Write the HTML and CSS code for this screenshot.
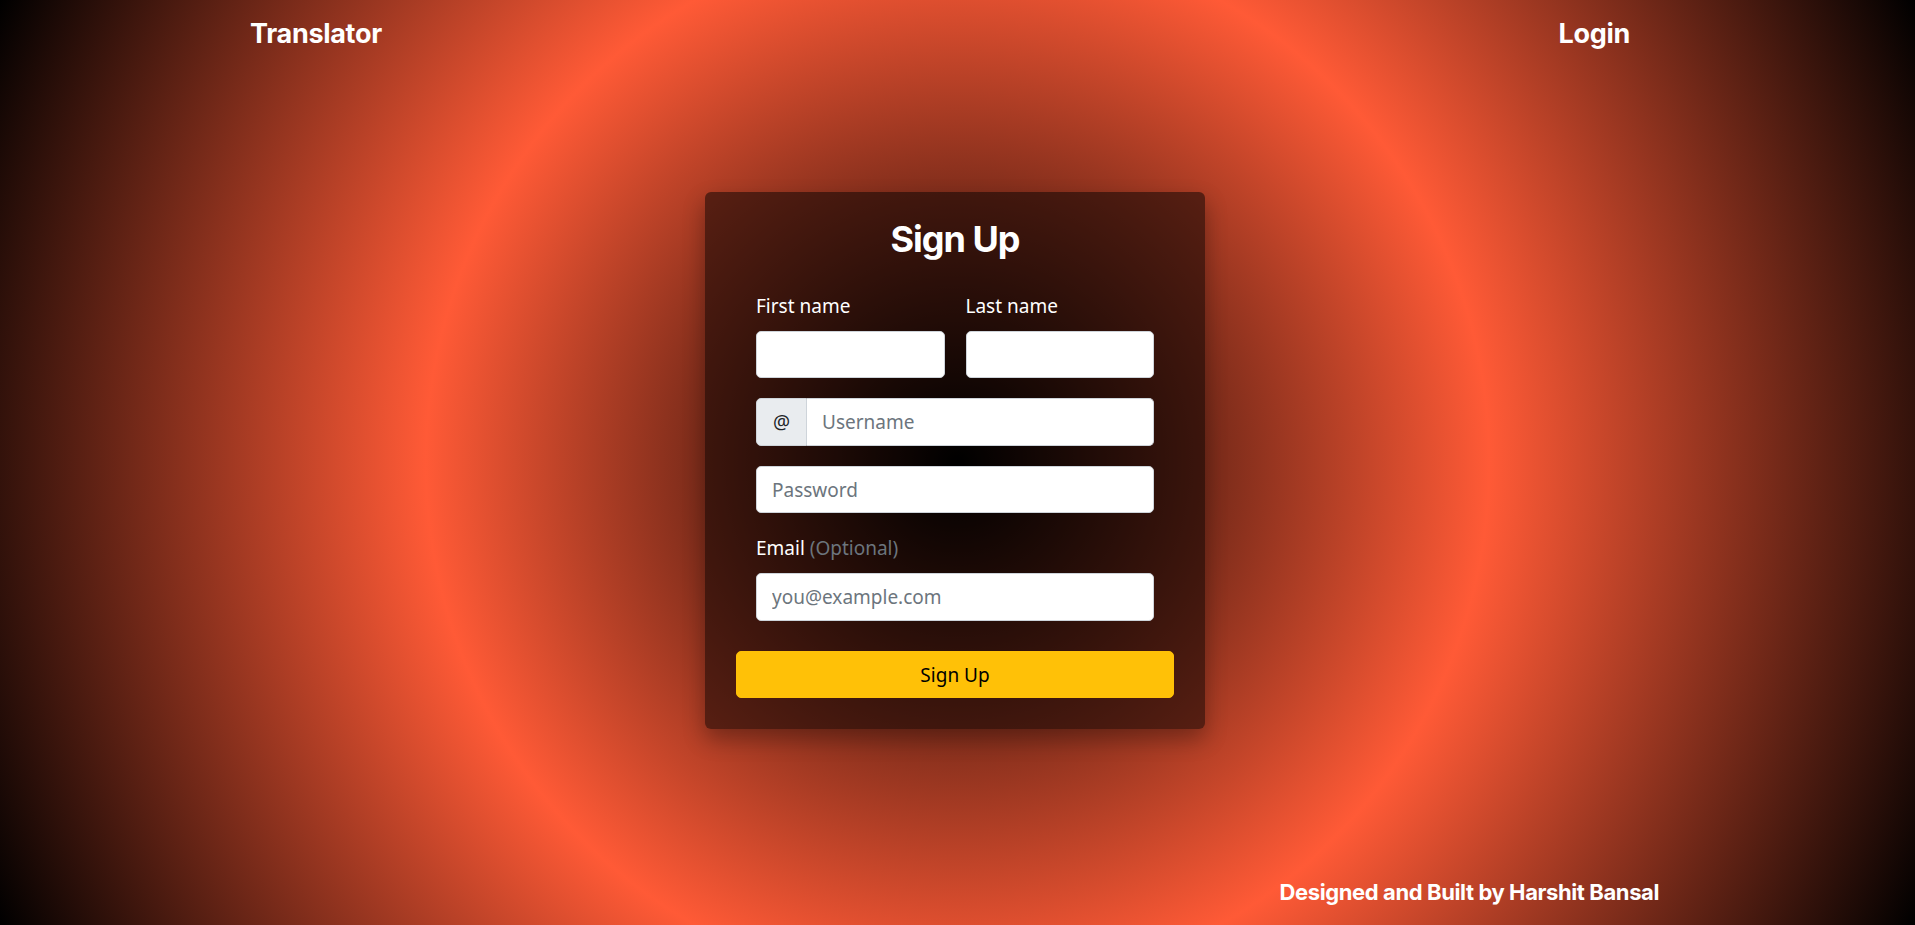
FILE: index.html
```html
<!DOCTYPE html>
<html lang="en">
<head>
<meta charset="utf-8">
<title>Translator - Sign Up</title>
<link rel="stylesheet" href="styles.css">
</head>
<body>
<div class="page">
  <header class="topbar">
    <a class="brand" href="#">Translator</a>
    <a class="nav-link" href="#">Login</a>
  </header>
  <main class="main">
    <div class="card">
      <h1 class="card-title">Sign Up</h1>
      <form class="form">
        <div class="row">
          <div class="col">
            <label class="form-label">First name</label>
            <input class="form-control" type="text">
          </div>
          <div class="col">
            <label class="form-label">Last name</label>
            <input class="form-control" type="text">
          </div>
        </div>
        <div class="input-group">
          <span class="addon">@</span>
          <input class="form-control grouped" type="text" placeholder="Username">
        </div>
        <input class="form-control block" type="password" placeholder="Password">
        <div class="email-field">
          <label class="form-label">Email <span class="muted">(Optional)</span></label>
          <input class="form-control" type="email" placeholder="you@example.com">
        </div>
      </form>
      <button class="btn" type="button">Sign Up</button>
    </div>
  </main>
  <footer class="footer">Designed and Built by Harshit Bansal</footer>
</div>
</body>
</html>
```

FILE: styles.css
```css
* {
  box-sizing: border-box;
}

html, body {
  margin: 0;
  height: 100%;
  overflow: hidden;
}

body {
  background: radial-gradient(circle at center, #000 0%, #ff5a36 50%, #000 100%);
  font-family: "Noto Sans", "Open Sans", sans-serif;
  color: #fff;
}

.page {
  height: 100vh;
  display: flex;
  flex-direction: column;
}

.topbar {
  display: flex;
  justify-content: space-between;
  align-items: center;
  padding: 18px 285px 0 250px;
}

.brand,
.nav-link {
  font-family: "Inter", "Liberation Sans", sans-serif;
  font-weight: 700;
  font-size: 27px;
  line-height: 32px;
  color: #fff;
  text-decoration: none;
  letter-spacing: -0.3px;
}

.main {
  flex: 1;
  display: flex;
  align-items: center;
  justify-content: center;
  padding: 0 5px 8px 0;
}

.card {
  width: 500px;
  background: rgba(0, 0, 0, 0.5);
  border-radius: 6px;
  box-shadow: 0 10px 22px rgba(0, 0, 0, 0.3);
  padding: 26px 31px 31px;
  display: flex;
  flex-direction: column;
}

.card-title {
  margin: 0 0 30px;
  font-family: "Inter", "Liberation Sans", sans-serif;
  font-weight: 700;
  font-size: 36px;
  line-height: 43px;
  letter-spacing: -1px;
  text-align: center;
  color: #fff;
}

.form {
  padding: 0 20px;
  display: flex;
  flex-direction: column;
  gap: 20px;
}

.row {
  display: flex;
  gap: 21px;
}

.col {
  flex: 1;
  display: flex;
  flex-direction: column;
}

.form-label {
  display: block;
  font-size: 19px;
  line-height: 30px;
  margin-bottom: 10px;
  color: #fff;
}

.muted {
  color: #6c757d;
}

.form-control {
  width: 100%;
  height: 47.5px;
  border: 1px solid #ced4da;
  border-radius: 5px;
  background: #fff;
  padding: 0 15px;
  font-family: "Noto Sans", "Open Sans", sans-serif;
  font-size: 19px;
  color: #212529;
  outline: none;
}

.form-control::placeholder {
  color: #6c757d;
}

.input-group {
  display: flex;
}

.addon {
  width: 51px;
  height: 47.5px;
  flex: none;
  display: flex;
  align-items: center;
  justify-content: center;
  background: #e9ecef;
  border: 1px solid #ced4da;
  border-radius: 5px 0 0 5px;
  color: #212529;
  font-size: 19px;
}

.form-control.grouped {
  border-left: 0;
  border-radius: 0 5px 5px 0;
}

.email-field {
  display: flex;
  flex-direction: column;
}

.btn {
  margin-top: 30px;
  height: 47.5px;
  width: 100%;
  border: 1px solid #ffc107;
  border-radius: 5px;
  background: #ffc107;
  color: #000;
  font-family: "Noto Sans", "Open Sans", sans-serif;
  font-size: 19px;
  cursor: pointer;
}

.footer {
  text-align: right;
  padding: 0 256px 20px 0;
  font-family: "Inter", "Liberation Sans", sans-serif;
  font-weight: 700;
  font-size: 22px;
  line-height: 26px;
  letter-spacing: -0.4px;
  color: #fff;
}
```
